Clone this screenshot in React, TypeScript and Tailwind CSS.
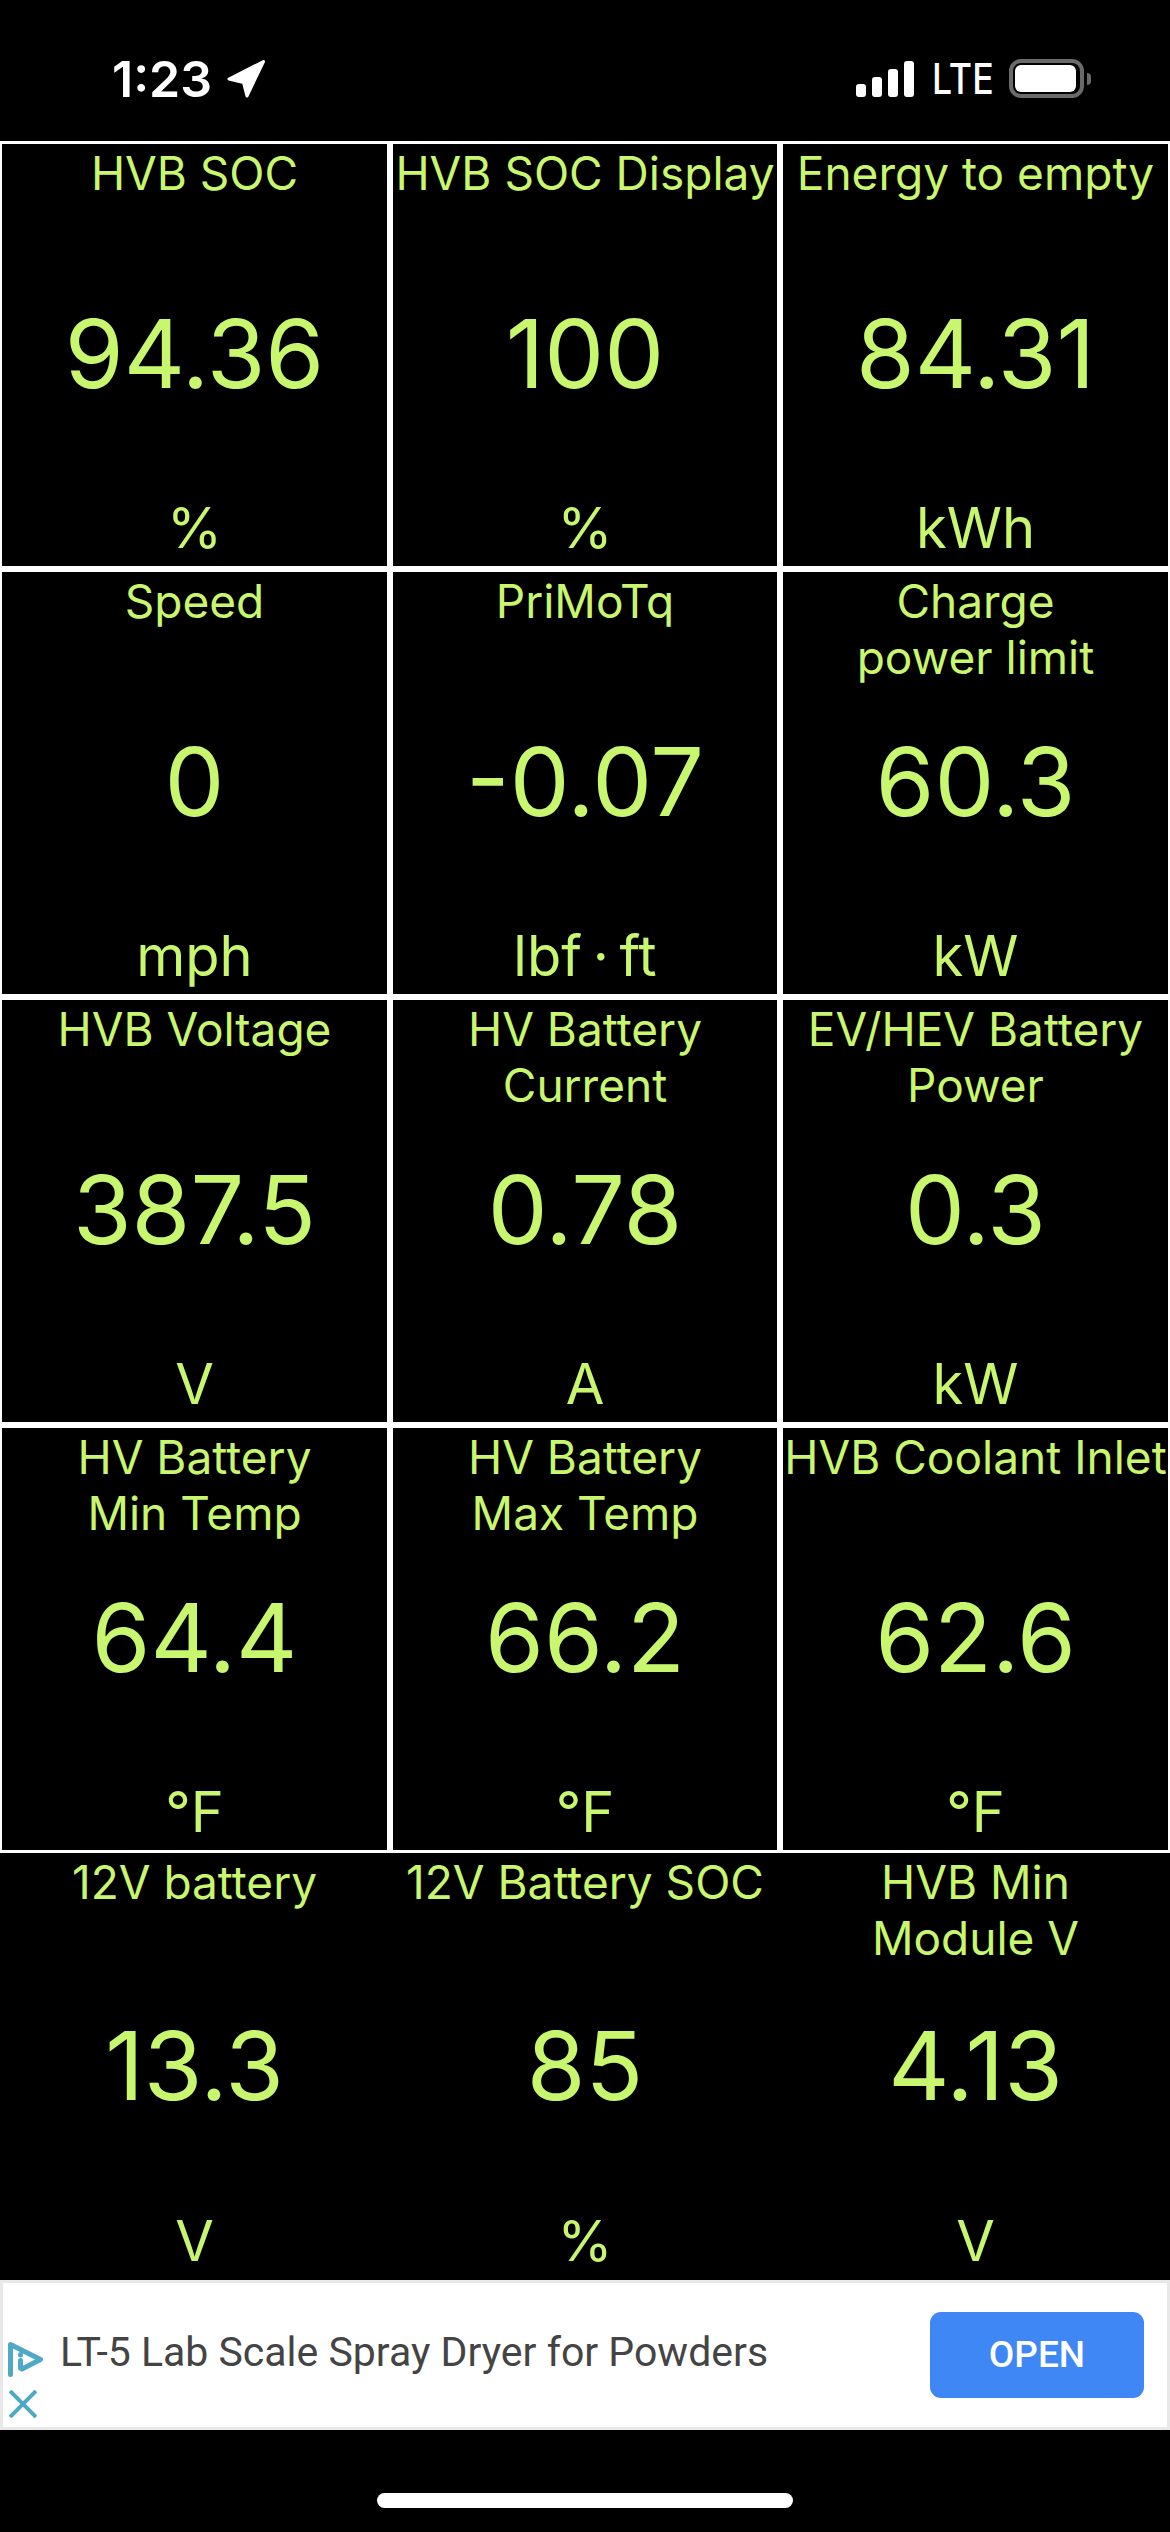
type Cell = { title: string[]; value: string; unit: string };

const cells: Cell[] = [
  { title: ['HVB SOC'], value: '94.36', unit: '%' },
  { title: ['HVB SOC Display'], value: '100', unit: '%' },
  { title: ['Energy to empty'], value: '84.31', unit: 'kWh' },
  { title: ['Speed'], value: '0', unit: 'mph' },
  { title: ['PriMoTq'], value: '-0.07', unit: 'lbf · ft' },
  { title: ['Charge', 'power limit'], value: '60.3', unit: 'kW' },
  { title: ['HVB Voltage'], value: '387.5', unit: 'V' },
  { title: ['HV Battery', 'Current'], value: '0.78', unit: 'A' },
  { title: ['EV/HEV Battery', 'Power'], value: '0.3', unit: 'kW' },
  { title: ['HV Battery', 'Min Temp'], value: '64.4', unit: '°F' },
  { title: ['HV Battery', 'Max Temp'], value: '66.2', unit: '°F' },
  { title: ['HVB Coolant Inlet'], value: '62.6', unit: '°F' },
];

const lastRow: Cell[] = [
  { title: ['12V battery'], value: '13.3', unit: 'V' },
  { title: ['12V Battery SOC'], value: '85', unit: '%' },
  { title: ['HVB Min', 'Module V'], value: '4.13', unit: 'V' },
];

const Tile = ({ cell, last = false }: { cell: Cell; last?: boolean }) => (
  <div className={`${last ? 'h-[427px]' : 'h-[422px]'} bg-black flex flex-col items-center text-[#c9f66f]`}>
    <div className="h-[112px] pt-[1px] text-[46px] leading-[56px] text-center whitespace-nowrap">
      {cell.title.map((line) => (
        <div key={line} className="h-[56px]">{line}</div>
      ))}
    </div>
    <div className={`${last ? 'h-[200px]' : 'h-[194px]'} flex items-center text-[95px] leading-none`}>{cell.value}</div>
    <div className={`${last ? 'mt-[48px]' : 'mt-[50px]'} text-[56px] leading-[56px] whitespace-nowrap [word-spacing:-5px]`}>{cell.unit}</div>
  </div>
);

export default function App() {
  return (
    <div className="w-[1170px] h-[2532px] bg-black overflow-hidden flex flex-col font-['Inter','Liberation_Sans',sans-serif]">
      <div className="h-[141px] pt-[16px] flex items-center justify-between pl-[112px] pr-[79px] text-white">
        <div className="flex items-center gap-[15px]">
          <span className="text-[50px] font-semibold leading-none">1:23</span>
          <svg viewBox="0 0 38 38" className="w-[38px] h-[38px]">
            <path d="M36.5 1.5 L2 19 L16.5 22.5 L20 36 Z" fill="white" stroke="white" strokeWidth="3" strokeLinejoin="round" />
          </svg>
        </div>
        <div className="flex items-center">
          <div className="flex items-end gap-[6px] h-[36px]">
            <div className="w-[10px] h-[13px] bg-white rounded-[3px]" />
            <div className="w-[10px] h-[20px] bg-white rounded-[3px]" />
            <div className="w-[10px] h-[28px] bg-white rounded-[3px]" />
            <div className="w-[10px] h-[36px] bg-white rounded-[3px]" />
          </div>
          <span className="w-[58px] ml-[18px] text-[42px] font-medium leading-none scale-x-[0.85] origin-left">LTE</span>
          <div className="ml-[19px] w-[75px] h-[39px] border-[4px] border-[#6a6a6a] rounded-[12px] pl-[2px] pr-[4px] py-[2px]">
            <div className="w-full h-full bg-white rounded-[6px]" />
          </div>
          <div className="ml-[3px] w-[4px] h-[12px] bg-[#6a6a6a] rounded-r-full" />
        </div>
      </div>
      <div className="grid grid-cols-[385px_384px_385px] gap-x-[6px] gap-y-[6px] bg-white px-[2px] pt-[3px] pb-[3px]">
        {cells.map((cell) => (
          <Tile key={cell.title.join(' ')} cell={cell} />
        ))}
      </div>
      <div className="grid grid-cols-[385px_384px_385px] gap-x-[6px] px-[2px] h-[427px]">
        {lastRow.map((cell) => (
          <Tile key={cell.title.join(' ')} cell={cell} last />
        ))}
      </div>
      <div className="h-[150px] bg-white border-[3px] border-[#e8e8e8] flex font-['Roboto',sans-serif]">
        <div className="w-[57px] pl-[5px] pt-[59px] flex flex-col gap-[13px]">
          <svg viewBox="0 0 35 35" className="w-[35px] h-[35px]" fill="none" stroke="#4fa9c4" strokeWidth="5" strokeLinejoin="round" strokeLinecap="round">
            <path d="M2.5 32.5 L2.5 2.5 L32.5 17.5 L14 27" />
            <path d="M12.5 12.5 L12.5 13" />
            <path d="M12.5 18.5 L12.5 26" />
          </svg>
          <svg viewBox="0 0 28 28" className="w-[28px] h-[28px] ml-[1px]" stroke="#4fa9c4" strokeWidth="4">
            <path d="M1 1 L27 27 M27 1 L1 27" />
          </svg>
        </div>
        <div className="flex-1 flex items-center pb-[4px] text-[41px] text-[#444444] whitespace-nowrap">LT-5 Lab Scale Spray Dryer for Powders</div>
        <div className="self-center mr-[23px] w-[214px] h-[86px] rounded-[11px] bg-[#3f87f5] text-white text-[37px] font-medium flex items-center justify-center">OPEN</div>
      </div>
      <div className="flex justify-center pt-[63px]">
        <div className="w-[416px] h-[15px] bg-white rounded-full" />
      </div>
    </div>
  );
}
